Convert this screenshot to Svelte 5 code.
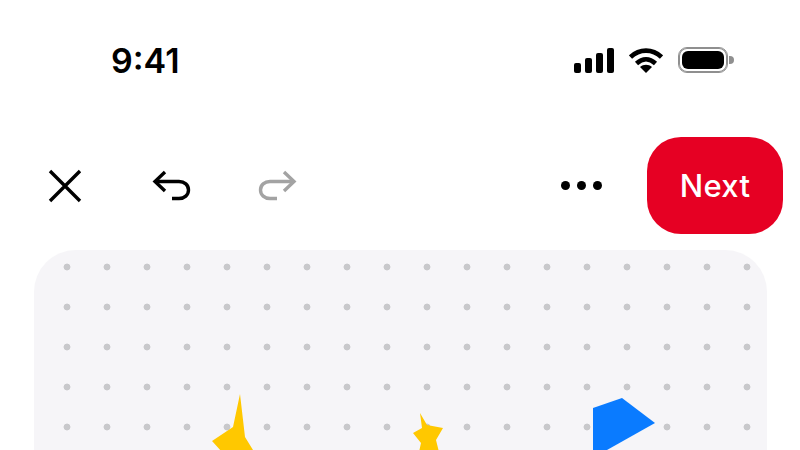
<script lang="ts">
  const bars = [
    { x: 0, y: 15, h: 10 },
    { x: 11, y: 10, h: 15 },
    { x: 22, y: 5, h: 20 },
    { x: 33, y: 0, h: 25 }
  ];
</script>

<div class="screen">
  <header class="status">
    <span class="time">9:41</span>
    <div class="status-icons">
      <svg width="40" height="25" viewBox="0 0 40 25" fill="#000" aria-hidden="true">
        {#each bars as bar}
          <rect x={bar.x} y={bar.y} width="7" height={bar.h} rx="2" />
        {/each}
      </svg>
      <svg width="34" height="25" viewBox="0 0 34 25" fill="none" stroke="#000" stroke-width="4.6" aria-hidden="true">
        <path d="M1.500 9C10.500 .5 23.500 .5 32.500 9" />
        <path d="M7.500 15.500C13.500 10 20.500 10 26.500 15.500" />
        <path d="M11 19 17 25 23 19C19.500 16 14.500 16 11 19Z" fill="#000" stroke="none" />
      </svg>
      <div class="battery">
        <div class="battery-shell"><div class="battery-fill"></div></div>
        <div class="battery-cap"></div>
      </div>
    </div>
  </header>

  <nav class="toolbar">
    <button class="icon-button" aria-label="Close">
      <svg width="34" height="34" viewBox="0 0 34 34" fill="none" stroke="#000" stroke-width="3.4">
        <path d="M2 2 32 32M32 2 2 32" />
      </svg>
    </button>
    <button class="icon-button" aria-label="Undo">
      <svg width="40" height="32" viewBox="0 0 40 32" fill="none" stroke="#000" stroke-width="3.4">
        <path d="M13 2 3 11.500 13 21" />
        <path d="M3 11.500H27C32.500 11.500 36.500 15 36.500 20C36.500 25 32.500 28.500 27 28.500H20" />
      </svg>
    </button>
    <button class="icon-button redo" aria-label="Redo">
      <svg width="40" height="32" viewBox="0 0 40 32" fill="none" stroke="#a3a3a3" stroke-width="3.4">
        <path d="M27 2 37 11.500 27 21" />
        <path d="M37 11.500H13C7.500 11.500 3.500 15 3.500 20C3.500 25 7.500 28.500 13 28.500H20" />
      </svg>
    </button>
    <button class="more" aria-label="More">
      <span></span><span></span><span></span>
    </button>
    <button class="next">Next</button>
  </nav>

  <main class="canvas">
    <svg class="shape" width="800" height="200" viewBox="0 250 800 200" aria-hidden="true">
      <polygon fill="#ffc800" points="240,394 245,437 253,450 222,452 212,441 233,427" />
      <polygon fill="#ffc800" points="420,413 427,425 443,428 436,440 439,452 419,452 421,443 413,433 422,428" />
      <polygon fill="#0a7bff" points="593,408 622,398 655,423 607,450 593,452" />
    </svg>
  </main>
</div>

<style>
  :global(body) {
    background: #fff;
  }

  .screen {
    width: 800px;
    height: 450px;
    overflow: hidden;
    background: #fff;
    font-family: Inter, "Liberation Sans", sans-serif;
  }

  .status {
    display: flex;
    align-items: center;
    justify-content: space-between;
    height: 120px;
    padding: 0 66px 0 111px;
    box-sizing: border-box;
  }

  .time {
    color: #000;
    font-size: 34px;
    font-weight: 600;
  }

  .status-icons {
    display: flex;
    align-items: center;
    gap: 15px;
  }

  .battery {
    display: flex;
    align-items: center;
    gap: 1px;
  }

  .battery-shell {
    box-sizing: border-box;
    width: 50px;
    height: 26px;
    padding: 3px;
    border: 1px solid #8f8f8f;
    border-radius: 9px;
    box-shadow: inset 0 0 0 1px #8f8f8f;
  }

  .battery-fill {
    height: 100%;
    border-radius: 6px;
    background: #000;
  }

  .battery-cap {
    width: 5px;
    height: 8px;
    border-radius: 0 4px 4px 0;
    background: #8f8f8f;
  }

  .toolbar {
    display: flex;
    align-items: center;
    height: 97px;
    margin-top: 17px;
    padding: 0 17px 0 48px;
  }

  button {
    padding: 0;
    border: 0;
    background: none;
    font: inherit;
  }

  .icon-button {
    display: flex;
    margin-right: 70px;
  }

  .redo {
    margin-right: 0;
    margin-left: -5px;
  }

  .more {
    display: flex;
    gap: 7px;
    margin-left: auto;
    margin-right: 45px;
  }

  .more span {
    width: 9px;
    height: 9px;
    border-radius: 50%;
    background: #000;
  }

  .next {
    width: 136px;
    height: 97px;
    border-radius: 34px;
    background: #e60023;
    color: #fff;
    font-size: 31px;
    font-weight: 500;
    letter-spacing: 0.3px;
  }

  .canvas {
    position: relative;
    height: 200px;
    margin: 16px 33px 0 34px;
    border-radius: 42px 42px 0 0;
    background-color: #f6f5f8;
    background-image: radial-gradient(circle at center, #c8c8cb 0 3px, transparent 3.8px);
    background-position: 13px -3px;
    background-size: 40px 40px;
    overflow: hidden;
  }

  .shape {
    position: absolute;
    top: 0;
    left: -34px;
  }
</style>
